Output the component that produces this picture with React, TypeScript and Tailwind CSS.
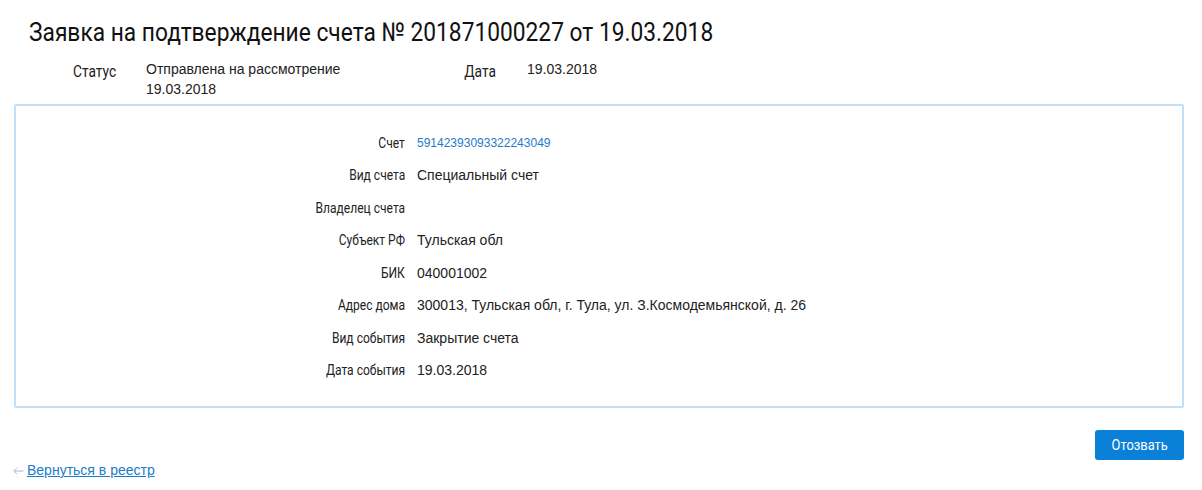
import React from "react";

const rows: { label: string; value: string; link?: boolean }[] = [
  { label: "Счет", value: "59142393093322243049", link: true },
  { label: "Вид счета", value: "Специальный счет" },
  { label: "Владелец счета", value: "" },
  { label: "Субъект РФ", value: "Тульская обл" },
  { label: "БИК", value: "040001002" },
  { label: "Адрес дома", value: "300013, Тульская обл, г. Тула, ул. З.Космодемьянской, д. 26" },
  { label: "Вид события", value: "Закрытие счета" },
  { label: "Дата события", value: "19.03.2018" },
];

export default function App() {
  return (
    <div className="w-[1202px] h-[490px] bg-white text-[#222] overflow-hidden" style={{ fontFamily: "'Liberation Sans', Arial, sans-serif" }}>
      <h1 className="pl-[29px] pt-[15px] text-[26px] leading-[34px] text-[#111] font-['Roboto',sans-serif] font-normal">
        <span className="inline-block origin-left scale-x-[0.875] whitespace-nowrap">
          Заявка на подтверждение счета № 201871000227 от 19.03.2018
        </span>
      </h1>
      <div className="flex mt-[10px] h-[45px]">
        <div className="w-[116px] text-right font-['Roboto',sans-serif] text-[16px] leading-[20px] pt-[3px]">
          <span className="inline-block origin-right scale-x-[0.86]">Статус</span>
        </div>
        <div className="w-[320px] pl-[30px] text-[14px] leading-[20px]">
          Отправлена на рассмотрение
          <br />
          19.03.2018
        </div>
        <div className="w-[60px] text-right font-['Roboto',sans-serif] text-[16px] leading-[20px] pt-[3px]">
          <span className="inline-block origin-right scale-x-[0.86]">Дата</span>
        </div>
        <div className="pl-[31px] text-[14px] leading-[20px]">19.03.2018</div>
      </div>
      <div className="ml-[14px] w-[1170px] h-[304px] border-2 border-[#c4dff6] rounded-[2px] pt-[21px]">
        {rows.map((r) => (
          <div key={r.label} className="flex items-center h-[32.5px]">
            <div className="w-[389px] text-right font-['Roboto',sans-serif] text-[14px] text-[#222]">
              <span className="inline-block origin-right scale-x-[0.86] whitespace-nowrap">{r.label}</span>
            </div>
            <div className={"pl-[12px] " + (r.link ? "text-[12px] text-[#1f7ac9]" : "text-[14px] text-[#222]")}>{r.value}</div>
          </div>
        ))}
      </div>
      <div className="flex justify-end w-[1184px] mt-[22px]">
        <button className="w-[89px] h-[30px] bg-[#0b80d8] rounded-[3px] text-white text-[15px] font-['Roboto',sans-serif]">
          <span className="inline-block scale-x-[0.86]">Отозвать</span>
        </button>
      </div>
      <div className="pl-[13px] mt-[1px] text-[14px] leading-[18px] flex items-center">
        <svg width="11" height="8" viewBox="0 0 11 8" className="mr-[3px] mt-[1px]" fill="none" stroke="#a9bdd2" strokeWidth="1">
          <path d="M10.5 4H1M4 0.8L0.8 4L4 7.2" />
        </svg>
        <a href="#" className="text-[#1a7ccb] underline">Вернуться в реестр</a>
      </div>
    </div>
  );
}
